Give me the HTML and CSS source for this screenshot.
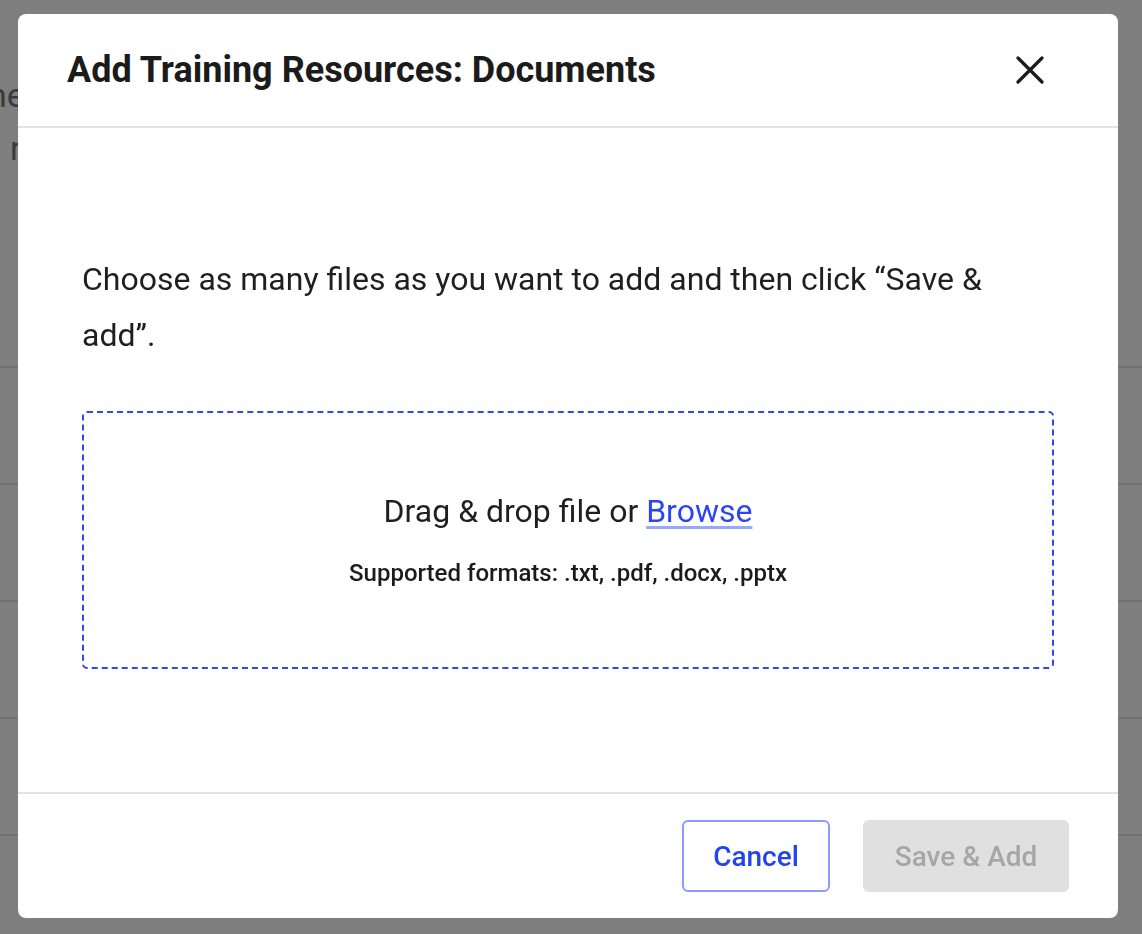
FILE: index.html
```html
<!DOCTYPE html>
<html lang="en">
<head>
    <meta charset="UTF-8">
    <meta name="viewport" content="width=device-width, initial-scale=1.0">
    <title>Add Training Resources</title>
    <link rel="stylesheet" href="styles.css">
</head>
<body>
    <div class="page">
        <p class="page-line first">ne</p>
        <p class="page-line second">ri</p>
        <div class="rows">
            <div class="row"></div>
            <div class="row"></div>
            <div class="row"></div>
            <div class="row"></div>
            <div class="row"></div>
        </div>
    </div>
    <div class="overlay"></div>
    <div class="modal">
        <div class="modal-header">
            <h2>Add Training Resources: Documents</h2>
            <button class="close" aria-label="Close">
                <svg width="28" height="28" viewBox="0 0 28 28">
                    <path d="M2 2 L26 26 M26 2 L2 26" stroke="#1b1b1b" stroke-width="3.2" stroke-linecap="round" fill="none"/>
                </svg>
            </button>
        </div>
        <div class="modal-body">
            <p class="intro">Choose as many files as you want to add and then click “Save &amp; add”.</p>
            <div class="dropzone">
                <div class="drop-text">Drag &amp; drop file or <a href="#">Browse</a></div>
                <div class="formats">Supported formats: .txt, .pdf, .docx, .pptx</div>
            </div>
        </div>
        <div class="modal-footer">
            <button class="btn cancel">Cancel</button>
            <button class="btn save" disabled>Save &amp; Add</button>
        </div>
    </div>
</body>
</html>
```

FILE: styles.css
```css
body {
    margin: 0;
    padding: 0;
    font-family: Roboto, "Liberation Sans", sans-serif;
    background-color: #fff;
    overflow: hidden;
}
.page {
    height: 934px;
    background-color: #fff;
    color: #767676;
}
.page-line {
    margin: 0;
    font-size: 34px;
    line-height: 53px;
}
.page-line.first {
    padding-top: 69px;
    margin-left: -12px;
}
.page-line.second {
    margin-left: 10px;
}
.rows {
    padding-top: 76px;
}
.row {
    height: 115px;
    border-bottom: 2px solid #e2e2e2;
}
.overlay {
    position: fixed;
    inset: 0;
    background-color: rgba(0, 0, 0, 0.5);
}
.modal {
    position: fixed;
    top: 14px;
    left: 18px;
    width: 1100px;
    height: 904px;
    background-color: #fff;
    border-radius: 8px;
    display: flex;
    flex-direction: column;
}
.modal-header {
    height: 112px;
    display: flex;
    align-items: center;
    justify-content: space-between;
    padding: 0 60px 0 49px;
    border-bottom: 2px solid #e1e1e1;
}
.modal-header h2 {
    margin: 0;
    font-size: 36px;
    font-weight: 700;
    color: #1b1b1b;
}
.close {
    width: 56px;
    height: 56px;
    border: none;
    background: none;
    padding: 0;
    display: flex;
    align-items: center;
    justify-content: center;
    cursor: pointer;
}
.modal-body {
    flex: 1;
    display: flex;
    flex-direction: column;
    justify-content: center;
    padding: 0 64px;
}
.intro {
    margin: 0 0 48px;
    font-size: 32px;
    line-height: 56px;
    color: #1f1f1f;
}
.dropzone {
    height: 254px;
    border: 2px dashed #2e48f2;
    border-radius: 5px;
    display: flex;
    flex-direction: column;
    align-items: center;
    justify-content: center;
    gap: 26px;
}
.drop-text {
    font-size: 32px;
    line-height: 40px;
    color: #1f1f1f;
}
.drop-text a {
    color: #2b45f5;
    text-decoration-color: #9ba8f9;
    text-underline-offset: 4px;
}
.formats {
    font-size: 24px;
    font-weight: 500;
    color: #1b1b1b;
    line-height: 32px;
}
.modal-footer {
    height: 124px;
    border-top: 2px solid #e1e1e1;
    display: flex;
    align-items: center;
    justify-content: flex-end;
    gap: 33px;
    padding: 0 49px;
}
.btn {
    height: 72px;
    border-radius: 6px;
    font-family: Roboto, "Liberation Sans", sans-serif;
    font-size: 28px;
    font-weight: 500;
    cursor: pointer;
}
.cancel {
    width: 148px;
    background-color: #fff;
    border: 2px solid #8a9bff;
    color: #2443f0;
}
.save {
    width: 206px;
    background-color: #e0e0e0;
    border: none;
    color: #a6a6a6;
    cursor: default;
}
```
